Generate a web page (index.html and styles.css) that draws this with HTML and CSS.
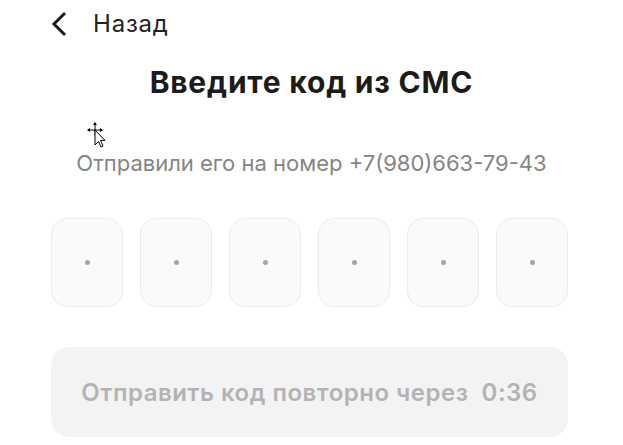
FILE: index.html
```html
<!DOCTYPE html>
<html lang="ru">
<head>
<meta charset="utf-8">
<link rel="stylesheet" href="styles.css">
</head>
<body>
<div class="page">
  <div class="back">
    <svg class="chev" width="16" height="26" viewBox="0 0 16 26"><path d="M14 2 L3 13 L14 24" fill="none" stroke="#1e1e1e" stroke-width="3"/></svg>
    <span class="back-text">Назад</span>
  </div>
  <h1 class="title">Введите код из СМС</h1>
  <p class="subtitle">Отправили его на номер +7(980)663-79-43</p>
  <div class="code">
    <div class="cell"><span class="dot"></span></div>
    <div class="cell"><span class="dot"></span></div>
    <div class="cell"><span class="dot"></span></div>
    <div class="cell"><span class="dot"></span></div>
    <div class="cell"><span class="dot"></span></div>
    <div class="cell"><span class="dot"></span></div>
  </div>
  <div class="resend">Отправить код повторно через&nbsp; 0:36</div>
  <svg class="cursor" width="24" height="30" viewBox="0 0 24 30">
    <g fill="#000">
      <path d="M10 1 L12 4 L8 4 Z"/>
      <rect x="9.5" y="3" width="1" height="11"/>
      <path d="M2 9 L5 7 L5 11 Z"/>
      <rect x="3" y="8.5" width="14" height="1"/>
      <path d="M18 9 L15 7 L15 11 Z"/>
    </g>
    <path d="M10 9 L10 24 L13.5 20.5 L16 26 L18 25 L15.5 19.5 L20 19.5 Z" fill="#fff" stroke="#000" stroke-width="1"/>
  </svg>
</div>
</body>
</html>
```
FILE: styles.css
```css
* { box-sizing: border-box; }
html, body { margin: 0; padding: 0; background: #fff; }
body { font-family: Inter, "Noto Sans", sans-serif; }
.page { position: relative; width: 623px; height: 445px; padding: 11px 0 0 51px; }
.back { display: flex; align-items: center; gap: 26px; height: 26px; }
.chev { display: block; }
.back-text { font-size: 24px; letter-spacing: 0.8px; color: #222; line-height: 26px; }
.title { margin: 27px 0 0 -51px; text-align: center; font-size: 30px; font-weight: 700; color: #1b1b1b; line-height: 36px; letter-spacing: 0.8px; }
.subtitle { margin: 49px 0 0 -51px; text-align: center; font-size: 22px; color: #858585; line-height: 28px; }
.code { display: flex; gap: 17px; width: 517px; margin-top: 41px; }
.cell { width: 72px; height: 89px; border: 1px solid #ececec; border-radius: 16px; background: #fafafa; display: flex; align-items: center; justify-content: center; }
.dot { width: 5px; height: 5px; border-radius: 50%; background: #a5a5a5; }
.resend { width: 517px; height: 90px; margin-top: 40px; border-radius: 18px; background: #f3f3f3; display: flex; align-items: center; justify-content: center; font-size: 24px; letter-spacing: 0.5px; font-weight: 600; color: #b3b3b3; }
.cursor { position: absolute; left: 85px; top: 121px; }
```
